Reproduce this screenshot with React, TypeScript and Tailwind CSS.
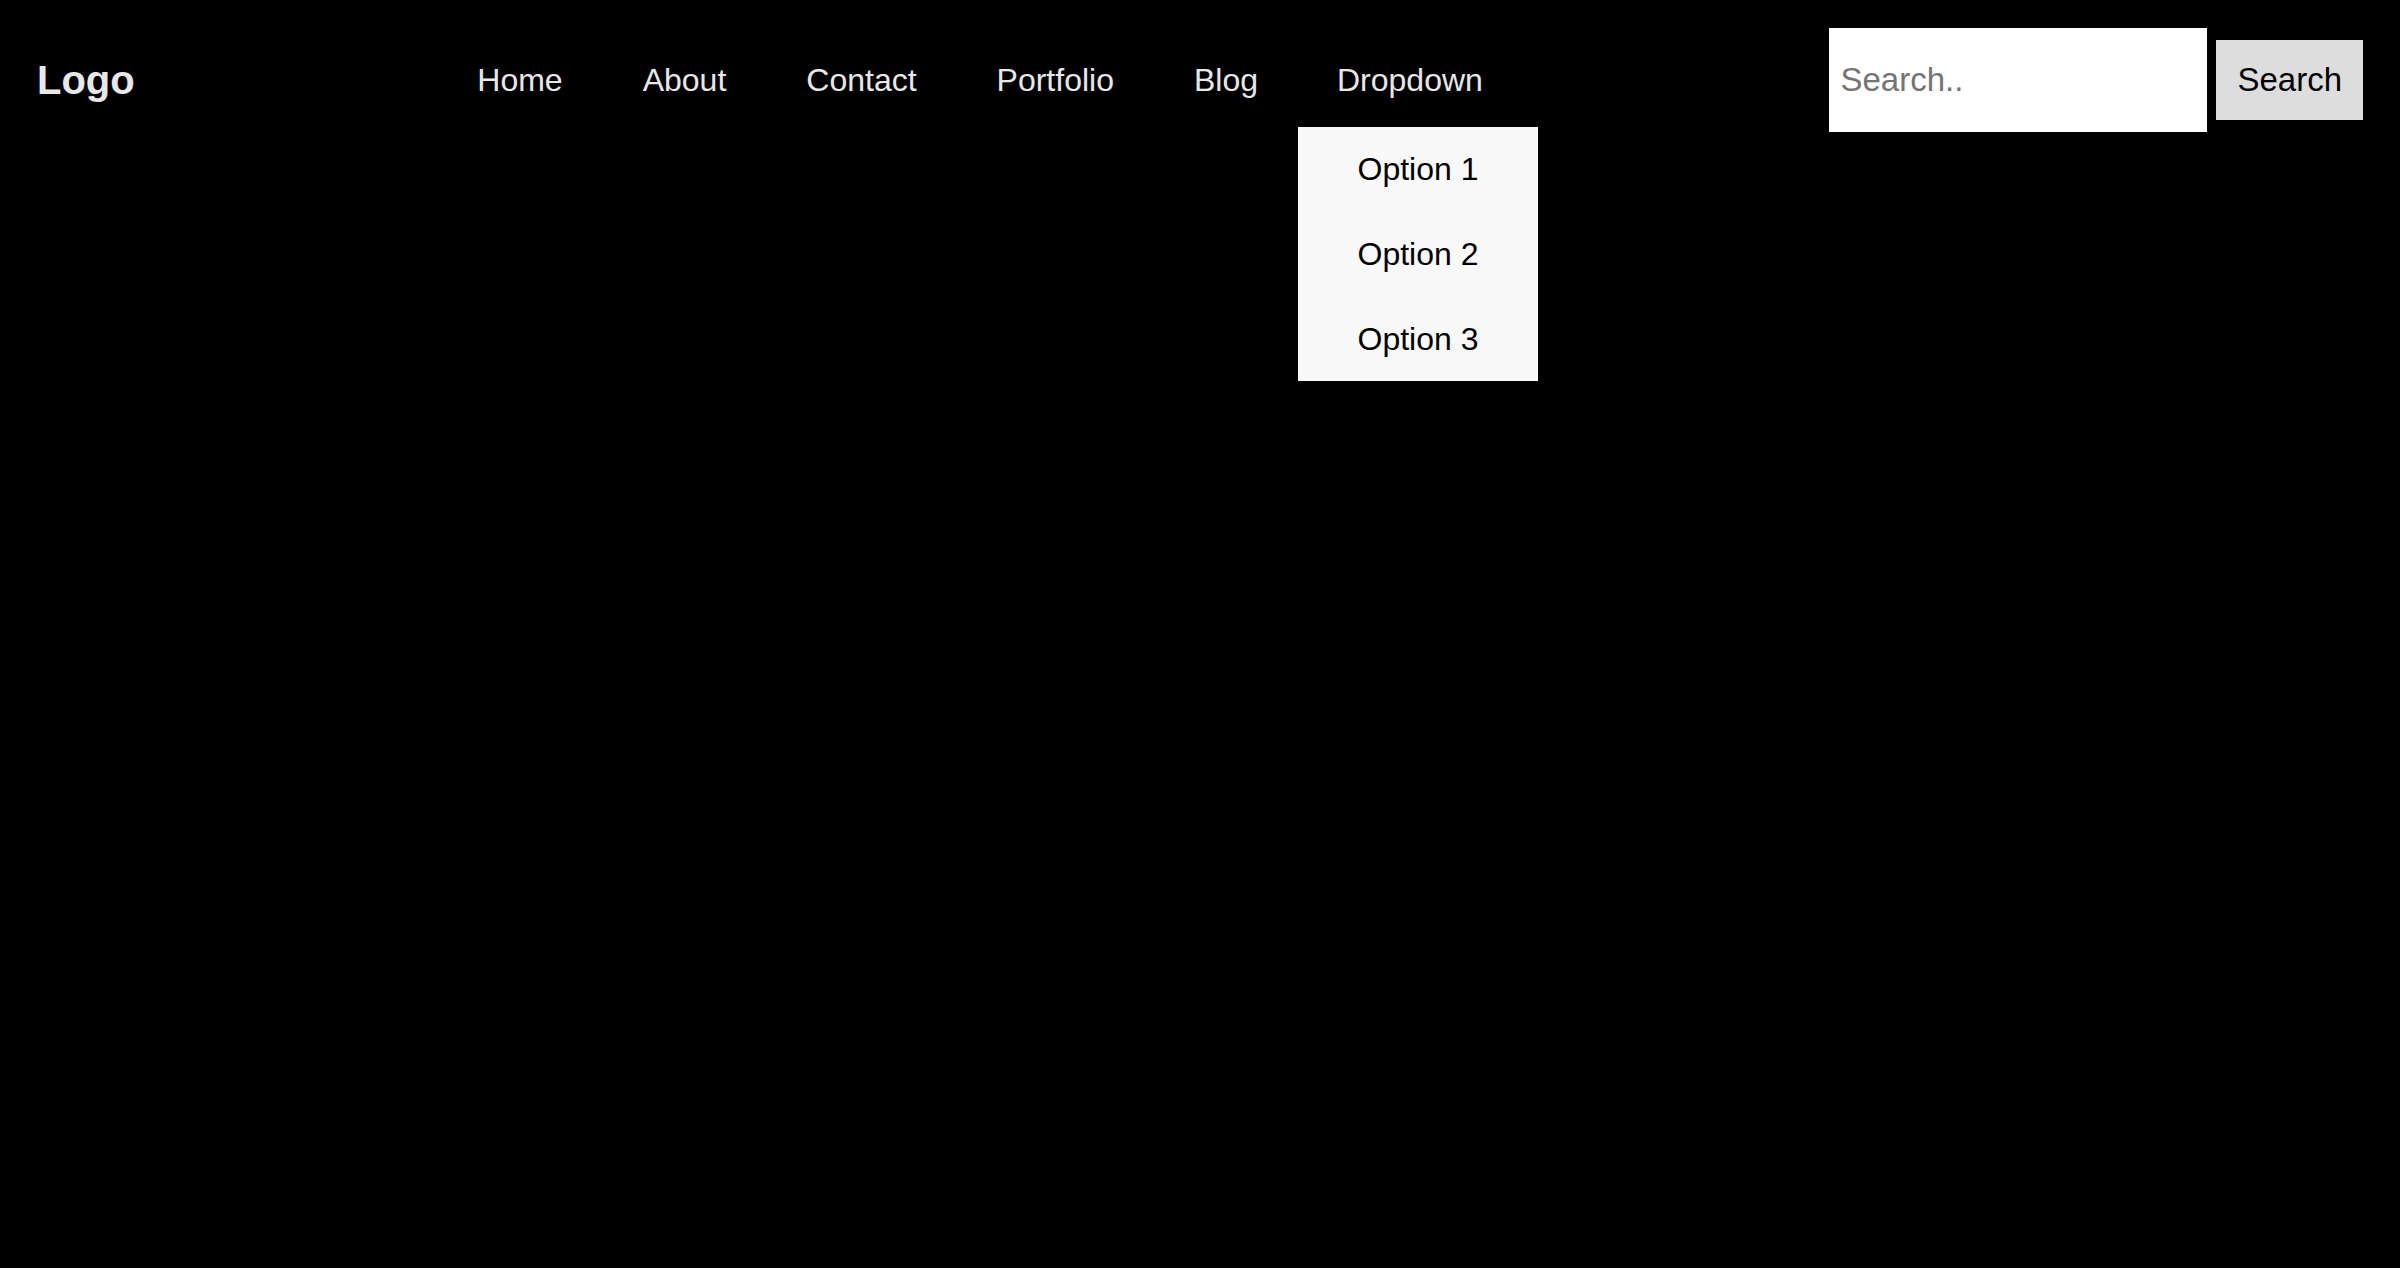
export default function App() {
  const links = ['Home', 'About', 'Contact', 'Portfolio', 'Blog'];
  const options = ['Option 1', 'Option 2', 'Option 3'];

  return (
    <div className="min-h-[1268px] bg-black font-['Liberation_Sans',Arial,sans-serif]">
      <header className="flex h-[160px] items-center justify-between pl-[37px] pr-[37px]">
        <div className="text-[40px] font-bold leading-none text-[#e8e8e8]">Logo</div>

        <nav className="mr-[5px] flex items-center">
          {links.map((link) => (
            <a
              key={link}
              href="#"
              className="flex h-[94px] items-center px-[40px] text-[32px] text-[#e8e8e8]"
            >
              {link}
            </a>
          ))}
          <div className="relative">
            <button className="flex h-[94px] items-center px-[39px] text-[32px] text-[#e8e8e8]">
              Dropdown
            </button>
            <div className="absolute left-0 top-full w-[240px] bg-[#f9f9f9]">
              {options.map((opt) => (
                <a
                  key={opt}
                  href="#"
                  className="flex h-[84.7px] items-center justify-center text-[32px] text-black"
                >
                  {opt}
                </a>
              ))}
            </div>
          </div>
        </nav>

        <div className="flex items-center gap-[9px]">
          <input
            type="text"
            placeholder="Search.."
            className="h-[104px] w-[378px] border-0 bg-white px-[11px] text-[33px] text-black outline-none placeholder:text-[#757575]"
          />
          <button className="h-[80px] bg-[#dddddd] px-[21px] text-[33px] text-black">
            Search
          </button>
        </div>
      </header>
    </div>
  );
}
